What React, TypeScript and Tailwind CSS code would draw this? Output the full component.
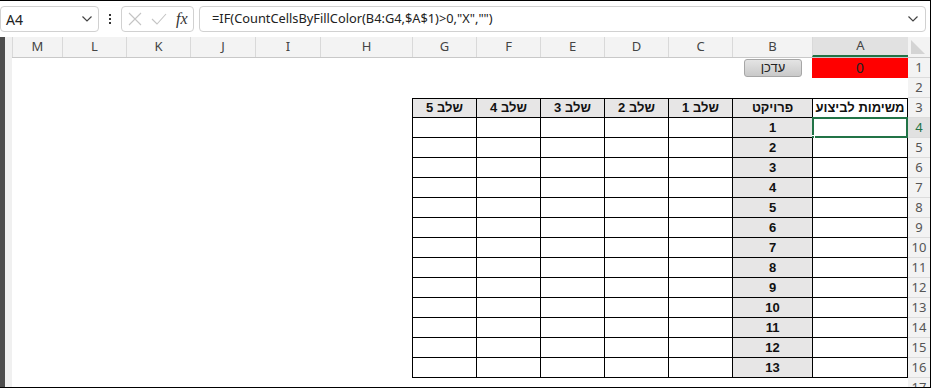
import React from 'react';

const cols = [
  { l: 'A', w: 96 },
  { l: 'B', w: 80 },
  { l: 'C', w: 64 },
  { l: 'D', w: 64 },
  { l: 'E', w: 64 },
  { l: 'F', w: 64 },
  { l: 'G', w: 64 },
  { l: 'H', w: 92 },
  { l: 'I', w: 65 },
  { l: 'J', w: 65 },
  { l: 'K', w: 64 },
  { l: 'L', w: 64 },
  { l: 'M', w: 50 },
];

const headers = ['משימות לביצוע', 'פרויקט', 'שלב 1', 'שלב 2', 'שלב 3', 'שלב 4', 'שלב 5'];

const uiFont = { fontFamily: '"Noto Sans", "Open Sans", sans-serif' };

const Chevron = () => (
  <svg width="12" height="8" viewBox="0 0 12 8" fill="none">
    <path d="M1.5 1.5 L6 6 L10.5 1.5" stroke="#444" strokeWidth="1.2" />
  </svg>
);

const FormulaBar = () => (
  <div className="flex h-[36px] items-center bg-white pr-[4px]" style={uiFont}>
    <div className="flex h-[26px] w-[99px] items-center justify-between rounded-[4px] border border-[#d1d1d1] bg-white pl-[5px] pr-[5px] text-[14px] text-[#222]">
      <span>A4</span>
      <Chevron />
    </div>
    <div className="flex w-[22px] flex-col items-center justify-center gap-[2px]">
      <span className="h-[2px] w-[2px] bg-[#333]" />
      <span className="h-[2px] w-[2px] bg-[#333]" />
      <span className="h-[2px] w-[2px] bg-[#333]" />
    </div>
    <div className="flex h-[26px] w-[73px] items-center rounded-[4px] border border-[#d1d1d1] bg-white pl-[6px]">
      <svg width="14" height="14" viewBox="0 0 14 14">
        <path d="M1 1 L13 13 M13 1 L1 13" stroke="#c4c4c4" strokeWidth="1.1" />
      </svg>
      <svg width="16" height="14" viewBox="0 0 16 14" className="ml-[9px]">
        <path d="M1 7 L6 12 L15 2" stroke="#c4c4c4" strokeWidth="1.1" fill="none" />
      </svg>
      <span className="ml-[9px] text-[16px] italic text-[#333]" style={{ fontFamily: '"Liberation Serif", serif' }}>
        fx
      </span>
    </div>
    <div className="ml-[5px] flex h-[26px] flex-1 items-center justify-between rounded-[4px] border border-[#d1d1d1] bg-white pl-[12px] pr-[6px] text-[12.8px] text-[#222]">
      <span>=IF(CountCellsByFillColor(B4:G4,$A$1)&gt;0,"X","")</span>
      <Chevron />
    </div>
  </div>
);

const ColumnHeader = () => (
  <div className="flex h-[21px] border-b border-[#c8c8c8] bg-[#f3f3f3]" style={uiFont}>
    <div className="relative w-[22px] shrink-0">
      <svg width="16" height="16" viewBox="0 0 16 16" className="absolute left-[2px] top-[2px]">
        <path d="M1 1 L1 15 L15 15 Z" fill="#d4d4d4" />
      </svg>
    </div>
    {cols.map((c) => (
      <div
        key={c.l}
        className={`flex shrink-0 items-center justify-center border-l border-[#d9d9d9] text-[13px] text-[#444] ${
          c.l === 'A' ? 'border-b-2 border-b-[#217346] bg-[#e1e1e1]' : ''
        }`}
        style={{ width: c.w }}
      >
        {c.l}
      </div>
    ))}
  </div>
);

const Cell = ({ r, ci, w }: { r: number; ci: number; w: number }) => {
  const l = cols[ci].l;
  if (r === 1 && l === 'A') {
    return (
      <div className="flex h-[20px] shrink-0 items-center justify-center bg-[#ff0000] text-[14px] text-[#222]" style={{ width: w }}>
        0
      </div>
    );
  }
  if (r === 1 && l === 'B') {
    return (
      <div className="flex h-[20px] shrink-0 items-center pl-[12px] pr-[10px]" style={{ width: w }}>
        <div className="flex h-[18px] flex-1 items-center justify-center rounded-[3px] border border-[#a6a6a6] bg-gradient-to-b from-[#e4e4e4] to-[#c9c9c9] text-[13px] text-[#222]">
          עדכן
        </div>
      </div>
    );
  }
  const inTable = r >= 3 && r <= 16 && ci <= 6;
  if (!inTable) return <div className="h-[20px] shrink-0" style={{ width: w }} />;
  const gray = (r === 3 && ci >= 1) || l === 'B';
  const text = r === 3 ? headers[ci] : l === 'B' ? String(r - 3) : '';
  return (
    <div
      className={`relative flex h-[20px] shrink-0 items-center justify-center border-b border-l border-black text-[13px] font-bold text-[#111] ${
        r === 3 ? 'border-t' : ''
      } ${ci === 0 ? 'border-r' : ''} ${gray ? 'bg-[#e7e6e6]' : 'bg-white'}`}
      style={{ width: w }}
    >
      {text}
      {r === 4 && l === 'A' && (
        <>
          <div className="absolute inset-[-1px] border-2 border-[#217346]" />
          <div className="absolute bottom-[-4px] left-[-4px] h-[6px] w-[6px] border border-white bg-[#217346]" />
        </>
      )}
    </div>
  );
};

const Sheet = () => {
  const rows = Array.from({ length: 17 }, (_, i) => i + 1);
  return (
    <div dir="rtl" className="w-[918px]" style={{ fontFamily: '"Liberation Sans", Arial, sans-serif' }}>
      <ColumnHeader />
      {rows.map((r) => (
        <div key={r} className="flex">
          <div
            className={`flex h-[20px] w-[22px] shrink-0 items-center justify-center border-b border-[#dcdcdc] text-[13px] ${
              r === 4 ? 'bg-[#e1e1e1] text-[#217346]' : 'bg-[#f3f3f3] text-[#555]'
            }`}
            style={uiFont}
          >
            {r}
          </div>
          {cols.map((c, ci) => (
            <Cell key={c.l} r={r} ci={ci} w={c.w} />
          ))}
        </div>
      ))}
    </div>
  );
};

export default function App() {
  return (
    <div className="h-[388px] w-[931px] overflow-hidden border-b border-r border-t border-black bg-white">
      <FormulaBar />
      <div className="flex">
        <div className="flex w-[12px] shrink-0">
          <div className="h-[360px] w-[5px] bg-[#4d4d4d]" />
          <div className="h-[360px] w-[7px] bg-[#f0f0f0]" />
        </div>
        <Sheet />
      </div>
    </div>
  );
}
